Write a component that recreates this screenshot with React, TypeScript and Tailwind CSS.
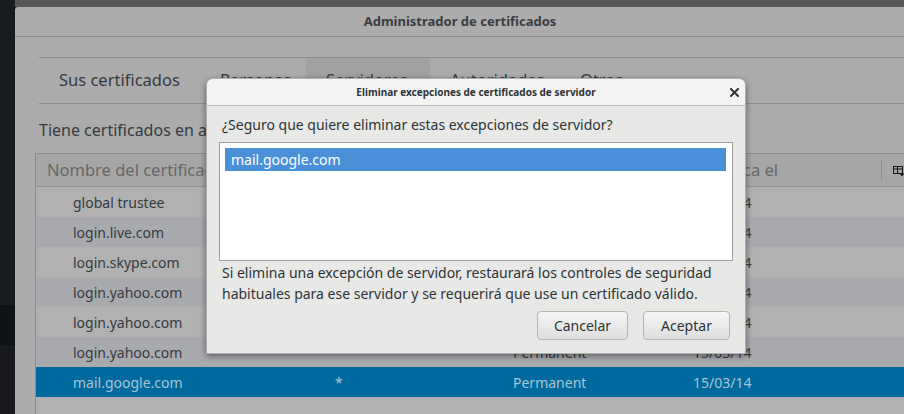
const rows = [
  { name: "global trustee" },
  { name: "login.live.com" },
  { name: "login.skype.com" },
  { name: "login.yahoo.com" },
  { name: "login.yahoo.com" },
  { name: "login.yahoo.com" },
  { name: "mail.google.com", selected: true },
];

const tabs = [
  { label: "Sus certificados", w: "w-[161px]" },
  { label: "Personas", w: "w-[106px]" },
  { label: "Servidores", w: "w-[124px]", active: true },
  { label: "Autoridades", w: "w-[130px]" },
  { label: "Otros", w: "w-[90px]" },
];

function ColumnsIcon() {
  return (
    <svg width="12" height="11" viewBox="0 0 12 11" fill="none" stroke="#161616" strokeWidth="1">
      <rect x="0.5" y="0.5" width="9" height="7" />
      <line x1="0.5" y1="3" x2="9.5" y2="3" />
      <line x1="4.5" y1="0.5" x2="4.5" y2="7.5" />
      <path d="M6.5 7.5 L11.5 7.5 L9 10.5 Z" fill="#161616" stroke="none" />
    </svg>
  );
}

function CloseIcon() {
  return (
    <svg width="9" height="9" viewBox="0 0 9 9" stroke="#2e3436" strokeWidth="2" strokeLinecap="square">
      <line x1="1" y1="1" x2="8" y2="8" />
      <line x1="8" y1="1" x2="1" y2="8" />
    </svg>
  );
}

function Dialog() {
  return (
    <div className="absolute left-[206px] top-[78px] flex h-[276px] w-[540px] flex-col overflow-hidden rounded-t-[7px] border border-black/25 bg-[#e8e8e7] shadow-[0_2px_6px_rgba(0,0,0,0.45)]">
      <div className="relative flex h-[27px] shrink-0 items-center justify-center border-b border-[#b9b9b7] bg-[#f4f4f4]">
        <span className="text-[10px] font-bold text-[#2e3436]">
          Eliminar excepciones de certificados de servidor
        </span>
        <div className="absolute right-[6px] top-[9px]">
          <CloseIcon />
        </div>
      </div>
      <div className="flex flex-1 flex-col px-[12px] pb-[13px] text-[14px] text-[#2e3436]">
        <p className="mt-[8px] pl-[3px] leading-[22px]">
          ¿Seguro que quiere eliminar estas excepciones de servidor?
        </p>
        <div className="mt-[6px] h-[119px] border border-[#9d9d9d] bg-white p-[5px] pr-[6px]">
          <div className="flex h-[23px] items-center bg-[#4a90d9] pl-[6px] text-white">mail.google.com</div>
        </div>
        <p className="mt-[1px] pl-[3px] leading-[21px]">
          Si elimina una excepción de servidor, restaurará los controles de seguridad
          <br />
          habituales para ese servidor y se requerirá que use un certificado válido.
        </p>
        <div className="mt-auto flex justify-end gap-[15px] pr-[3px]">
          <button className="h-[29px] w-[91px] rounded-[4px] border border-[#b6b6b3] bg-gradient-to-b from-[#f6f6f6] to-[#dedede] text-[#2e3436]">
            Cancelar
          </button>
          <button className="h-[29px] w-[87px] rounded-[4px] border border-[#b6b6b3] bg-gradient-to-b from-[#f6f6f6] to-[#dedede] text-[#2e3436]">
            Aceptar
          </button>
        </div>
      </div>
    </div>
  );
}

export default function App() {
  return (
    <div className="relative h-[414px] w-[904px] overflow-hidden bg-[#15181c] font-['Noto_Sans',sans-serif]">
      <div className="flex h-full">
        <div className="flex w-[15px] shrink-0 flex-col">
          <div className="h-[305px] bg-[#181b1f]" />
          <div className="h-[40px] bg-[#101316]" />
          <div className="flex-1 bg-[#17191d]" />
        </div>
        <div className="flex flex-1 flex-col">
          <div className="h-[7px] bg-[#575757]" />
          <div className="flex flex-1 flex-col rounded-tl-[3px] bg-[#acacac] text-[#363a3f]">
            <div className="flex h-[30px] shrink-0 items-center justify-center border-b border-[#8e8e8e]">
              <span className="text-[13px] font-bold text-[#3a3d42]">Administrador de certificados</span>
            </div>
            <div className="ml-[24px] mt-[20px] flex h-[47px] border-y border-[#8e8e8e] text-[16.5px]">
              {tabs.map((t) => (
                <div
                  key={t.label}
                  className={`${t.w} flex items-center pl-[20px] ${t.active ? "bg-[#a2a2a2]" : ""}`}
                >
                  {t.label}
                </div>
              ))}
            </div>
            <p className="ml-[24px] mt-[14px] text-[16px] leading-[25px]">
              Tiene certificados en archivo que identifican a estos servidores:
            </p>
            <div className="ml-[20px] mt-[10px] flex flex-1 flex-col border-l border-t border-[#8c8c8c] bg-[#b1b1b1]">
              <div className="flex h-[33px] shrink-0 items-center border-b border-[#939393] bg-[#a6a6a6] text-[16.5px] text-[#686868]">
                <div className="w-[285px] shrink-0 pl-[11px]">Nombre del certificado</div>
                <div className="w-[180px] shrink-0 pl-[11px]">Servidor</div>
                <div className="w-[180px] shrink-0 pl-[11px]">Tiempo de vida</div>
                <div className="w-[200px] shrink-0 pl-[22px]">Caduca el</div>
                <div className="h-[20px] w-px bg-[#8e8e8e]" />
                <div className="pl-[11px] pt-[2px]">
                  <ColumnsIcon />
                </div>
              </div>
              {rows.map((r, i) => (
                <div
                  key={i}
                  className={`flex h-[30px] shrink-0 items-center text-[14px] ${
                    r.selected ? "bg-[#00699d] text-[#a8c5d6]" : i % 2 === 1 ? "bg-[#a9aaae]" : "bg-[#b1b1b1]"
                  }`}
                >
                  <div className="w-[285px] shrink-0 pl-[37px]">{r.name}</div>
                  <div className="w-[180px] shrink-0 pl-[14px]">*</div>
                  <div className="w-[180px] shrink-0 pl-[12px]">Permanent</div>
                  <div className="w-[200px] shrink-0 pl-[12px]">15/03/14</div>
                </div>
              ))}
            </div>
          </div>
        </div>
      </div>
      <Dialog />
    </div>
  );
}
